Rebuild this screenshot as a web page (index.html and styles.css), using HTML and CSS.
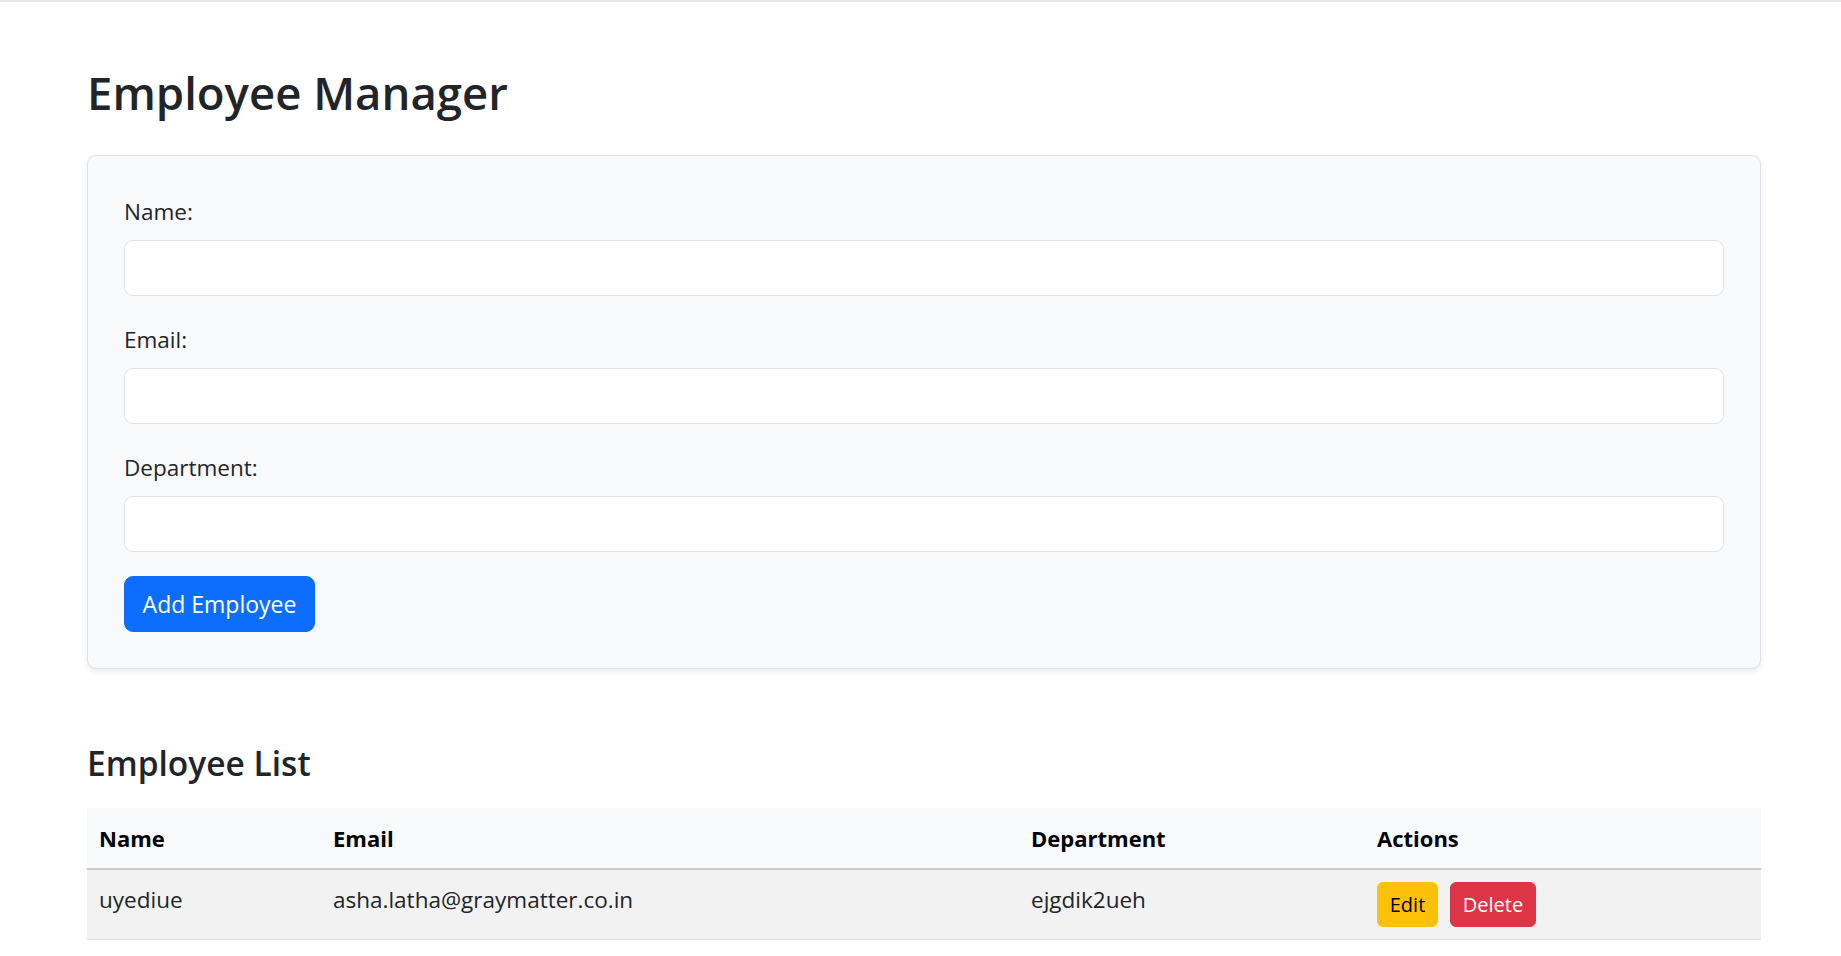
FILE: index.html
```html
<!DOCTYPE html>
<html lang="en">
<head>
<meta charset="utf-8">
<title>Employee Manager</title>
<link rel="stylesheet" href="styles.css">
</head>
<body>
<div class="page">
  <h1 class="title">Employee Manager</h1>
  <form class="card">
    <div class="field">
      <label class="label" for="name">Name:</label>
      <input class="input" id="name" type="text">
    </div>
    <div class="field">
      <label class="label" for="email">Email:</label>
      <input class="input" id="email" type="email">
    </div>
    <div class="field">
      <label class="label" for="dept">Department:</label>
      <input class="input" id="dept" type="text">
    </div>
    <div class="form-actions">
      <button class="btn btn-primary" type="button">Add Employee</button>
    </div>
  </form>

  <h4 class="subtitle">Employee List</h4>
  <table class="table">
    <colgroup>
      <col class="c-name">
      <col class="c-email">
      <col class="c-dept">
      <col class="c-actions">
    </colgroup>
    <thead>
      <tr>
        <th>Name</th>
        <th>Email</th>
        <th>Department</th>
        <th>Actions</th>
      </tr>
    </thead>
    <tbody>
      <tr>
        <td>uyediue</td>
        <td>asha.latha@graymatter.co.in</td>
        <td>ejgdik2ueh</td>
        <td>
          <div class="actions">
            <button class="btn-sm btn-warning" type="button">Edit</button>
            <button class="btn-sm btn-danger" type="button">Delete</button>
          </div>
        </td>
      </tr>
    </tbody>
  </table>
</div>
</body>
</html>
```
FILE: styles.css
```css
html, body {
  margin: 0;
  padding: 0;
  background: #ffffff;
}
body {
  border-top: 2px solid #e6e6e6;
  font-family: "Open Sans", "Noto Sans", sans-serif;
  color: #212529;
  font-size: 22.5px;
  line-height: 36px;
}
.page {
  margin: 0 80px 0 87px;
  padding-top: 62px;
  padding-bottom: 40px;
}
.title {
  margin: 0 0 35px 0;
  font-size: 45.5px;
  line-height: 56px;
  font-weight: 600;
  color: #212529;
}
.card {
  display: block;
  margin: 0;
  background: #f8f9fa;
  border: 1px solid #dee2e6;
  border-radius: 9px;
  padding: 36px;
  box-shadow: 0 3px 6px rgba(0, 0, 0, 0.075);
}
.field {
  display: flex;
  flex-direction: column;
  margin-bottom: 24px;
}
.label {
  display: block;
  font-size: 22.5px;
  line-height: 36px;
  padding-top: 2px;
  margin-bottom: 10px;
  color: #212529;
}
.input {
  display: block;
  box-sizing: border-box;
  width: 100%;
  height: 56px;
  margin: 0;
  border: 1px solid #dee2e6;
  border-radius: 9px;
  background: #ffffff;
  padding: 0 18px;
  font-family: inherit;
  font-size: 22.5px;
}
.form-actions {
  display: flex;
}
.btn {
  display: block;
  box-sizing: border-box;
  height: 56px;
  padding: 0;
  border: 1px solid transparent;
  border-radius: 9px;
  font-family: inherit;
  font-size: 23px;
  line-height: 36px;
  white-space: nowrap;
  text-align: center;
  cursor: pointer;
}
.btn-primary {
  background: #0d6efd;
  border-color: #0d6efd;
  color: #ffffff;
  width: 191px;
}
.subtitle {
  margin: 73px 0 24px 0;
  font-size: 33.5px;
  line-height: 42px;
  font-weight: 600;
  color: #212529;
}
.table {
  width: 100%;
  border-collapse: collapse;
  table-layout: fixed;
}
.c-name { width: 234px; }
.c-email { width: 698px; }
.c-dept { width: 346px; }
.c-actions { width: 396px; }
.table th,
.table td {
  padding: 12px;
  text-align: left;
  vertical-align: top;
  font-size: 22.5px;
  line-height: 36px;
}
.table thead th {
  background: #f8f9fa;
  color: #000000;
  font-weight: 700;
  font-size: 22px;
  border-bottom: 2px solid #c9cacb;
}
.table tbody td {
  background: #f2f2f2;
  color: #212529;
  border-bottom: 1px solid #dee2e6;
}
.actions {
  display: flex;
  gap: 12px;
}
.btn-sm {
  box-sizing: border-box;
  height: 45px;
  padding: 0;
  border: 1px solid transparent;
  border-radius: 6px;
  font-family: inherit;
  font-size: 20px;
  line-height: 30px;
  text-align: center;
  white-space: nowrap;
  cursor: pointer;
}
.btn-warning {
  width: 61px;
  background: #ffc107;
  border-color: #ffc107;
  color: #000000;
}
.btn-danger {
  width: 86px;
  background: #dc3545;
  border-color: #dc3545;
  color: #ffffff;
}
```
